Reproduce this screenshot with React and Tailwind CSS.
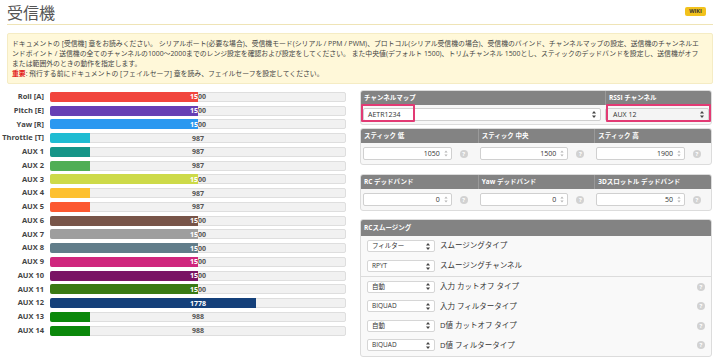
import React from "react";

const channels = [
  { label: "Roll [A]", value: 1500, color: "#f1453d" },
  { label: "Pitch [E]", value: 1500, color: "#673fb4" },
  { label: "Yaw [R]", value: 1500, color: "#2b98f0" },
  { label: "Throttle [T]", value: 987, color: "#1fbcd2", wide: true },
  { label: "AUX 1", value: 987, color: "#159588" },
  { label: "AUX 2", value: 987, color: "#50ae55" },
  { label: "AUX 3", value: 1500, color: "#cdda49" },
  { label: "AUX 4", value: 987, color: "#fdc02f" },
  { label: "AUX 5", value: 987, color: "#fc5830" },
  { label: "AUX 6", value: 1500, color: "#785549" },
  { label: "AUX 7", value: 1500, color: "#9e9e9e" },
  { label: "AUX 8", value: 1500, color: "#617d8a" },
  { label: "AUX 9", value: 1500, color: "#cf267d" },
  { label: "AUX 10", value: 1500, color: "#7a1464" },
  { label: "AUX 11", value: 1500, color: "#3a7a14" },
  { label: "AUX 12", value: 1778, color: "#14407a" },
  { label: "AUX 13", value: 988, color: "#0b880b" },
  { label: "AUX 14", value: 988, color: "#0b880b" },
];

function Bar({ label, value, color, wide }) {
  const pct = Math.max(0, Math.min(1, (value - 800) / 1400)) * 100;
  return (
    <div className="flex items-center h-[13.75px]">
      <div
        className={
          "w-[44px] shrink-0 text-right text-[7.5px] font-bold text-[#444] whitespace-nowrap leading-none " +
          (wide ? "mr-[-3px]" : "")
        }
      >
        {label}
      </div>
      <div
        className={
          "relative shrink-0 w-[296px] h-[10px] bg-[#f1f1f1] border border-[#dedede] rounded-[2px] " +
          (wide ? "ml-[9px]" : "ml-[6px]")
        }
      >
        <div className="absolute inset-0 flex items-center justify-center text-[7px] font-bold text-[#555] leading-none">
          {value}
        </div>
        <div
          className="absolute left-[-1px] top-[-1px] bottom-[-1px] overflow-hidden rounded-l-[2px]"
          style={{ width: `calc(${pct}% + 1px)`, background: color }}
        >
          <div className="w-[296px] h-full flex items-center justify-center text-[7px] font-bold text-white leading-none">
            {value}
          </div>
        </div>
      </div>
    </div>
  );
}

function SelectArrows() {
  return (
    <svg width="4" height="7" viewBox="0 0 4 7" className="shrink-0">
      <path d="M2 0 L4 2.6 L0 2.6 Z" fill="#444" />
      <path d="M2 7 L4 4.4 L0 4.4 Z" fill="#444" />
    </svg>
  );
}

function SpinArrows() {
  return (
    <svg width="4" height="7" viewBox="0 0 4 7" className="shrink-0">
      <path d="M2 0.5 L3.6 2.6 L0.4 2.6 Z" fill="#b5b5b5" />
      <path d="M2 6.5 L3.6 4.4 L0.4 4.4 Z" fill="#b5b5b5" />
    </svg>
  );
}

function Help() {
  return (
    <div className="w-[8px] h-[8px] rounded-full bg-[#d2d2d2] flex items-center justify-center text-white text-[6px] font-bold leading-none shrink-0">
      ?
    </div>
  );
}

function NumField({ value }) {
  return (
    <div className="flex items-center px-[2px] h-[21px]">
      <div className="flex-1 h-[13px] bg-white border border-[#d0d0d0] rounded-[2px] flex items-center justify-end pr-[3px] gap-[4px]">
        <span className="text-[7px] text-[#333] leading-none">{value}</span>
        <SpinArrows />
      </div>
      <div className="w-[24px] flex justify-center">
        <Help />
      </div>
    </div>
  );
}

function TriplePanel({ headers, values }) {
  return (
    <div className="rounded-[3px] border border-[#dcdcdc] bg-[#f7f7f7] overflow-hidden">
      <div className="grid grid-cols-3 bg-[#838383] h-[14px]">
        {headers.map((h, i) => (
          <div
            key={h}
            className={
              "flex items-center px-[3px] text-white font-bold text-[6.5px] whitespace-nowrap " +
              (i > 0 ? "border-l border-[#9a9a9a]" : "")
            }
          >
            {h}
          </div>
        ))}
      </div>
      <div className="grid grid-cols-3">
        {values.map((v, i) => (
          <NumField key={i} value={v} />
        ))}
      </div>
    </div>
  );
}

function SmoothRow({ sel, label, help, tall }) {
  return (
    <div className={"flex items-center pl-[6px] pr-[6px] " + (tall ? "h-[20px]" : "h-[19.5px]")}>
      <div className="w-[68px] h-[12px] bg-white border border-[#d6d6d6] rounded-[2px] flex items-center justify-between px-[4px]">
        <span className="text-[6.5px] text-[#333] leading-none">{sel}</span>
        <SelectArrows />
      </div>
      <span className="ml-[5px] text-[7.5px] text-[#333] leading-none">{label}</span>
      <div className="flex-1" />
      {help && <Help />}
    </div>
  );
}

export default function App() {
  return (
    <div className="w-[720px] h-[361px] overflow-hidden bg-white text-[#333] font-['Open_Sans','Noto_Sans_CJK_JP',sans-serif]">
      <div className="px-[7px]">
        <div className="flex items-center justify-between h-[25px] border-b border-[#efe4b6]">
          <h1 className="text-[16px] text-[#555] leading-none mt-[1px] font-normal">受信機</h1>
          <span className="bg-[#f2c21c] text-[5.5px] font-bold text-[#333] w-[21px] h-[9px] flex items-center justify-center rounded-[2px] mr-[7px] mb-[1px]">
            WIKI
          </span>
        </div>

        <div className="mt-[8px] h-[51px] bg-[#fff8d9] border border-[#f5ecc4] rounded-[2px] pl-[4px] pt-[5px] text-[6.85px] leading-[10px] text-[#444] whitespace-nowrap overflow-hidden">
          <div>
            ドキュメントの [受信機] 章をお読みください。 シリアルポート(必要な場合)、受信機モード(シリアル / PPM / PWM)、プロトコル(シリアル受信機の場合)、受信機のバインド、チャンネルマップの設定、送信機のチャンネルエ
          </div>
          <div>
            ンドポイント / 送信機の全てのチャンネルの1000～2000までのレンジ設定を確認および設定をしてください。 また中央値(デフォルト 1500)、トリムチャンネル 1500とし、スティックのデッドバンドを設定し、送信機がオフ
          </div>
          <div>または範囲外のときの動作を指定します。</div>
          <div>
            <span className="text-[#e2231a] font-bold">重要</span>: 飛行する前にドキュメントの [フェイルセーフ] 章を読み、フェイルセーフを設定してください。
          </div>
        </div>

        <div className="flex mt-[6px]">
          <div className="w-[346px] shrink-0 ml-[-7px] flex flex-col">
            {channels.map((c) => (
              <Bar key={c.label} {...c} />
            ))}
          </div>

          <div className="ml-[14px] w-[352px] shrink-0 flex flex-col">
            <div className="relative rounded-[3px] border border-[#dcdcdc] bg-[#f7f7f7]">
              <div className="flex bg-[#838383] h-[14px] rounded-t-[2px]">
                <div className="flex-1 flex items-center px-[3px] text-white font-bold text-[6.5px]">チャンネルマップ</div>
                <div className="w-[106px] flex items-center px-[3px] border-l border-[#9a9a9a] text-white font-bold text-[6.5px]">
                  RSSI チャンネル
                </div>
              </div>
              <div className="flex items-center h-[19px] px-[2px]">
                <div className="flex-1 h-[13px] bg-white border border-[#d0d0d0] rounded-[2px] flex items-center justify-between pl-[4px] pr-[4px]">
                  <span className="text-[7px] leading-none">AETR1234</span>
                  <SelectArrows />
                </div>
                <div className="w-[104px] ml-[4px] h-[13px] bg-[#f4f4f4] border border-[#d0d0d0] rounded-[2px] flex items-center justify-between pl-[7px] pr-[4px]">
                  <span className="text-[7px] leading-none">AUX 12</span>
                  <SelectArrows />
                </div>
              </div>
              <div className="absolute left-[0px] top-[13px] w-[54px] h-[18px] border-2 border-[#e23a74] rounded-[1px]" />
              <div className="absolute right-[0px] top-[13px] w-[105px] h-[18px] border-2 border-[#e23a74] rounded-[1px]" />
            </div>

            <div className="mt-[3px]">
              <TriplePanel headers={["スティック 低", "スティック 中央", "スティック 高"]} values={["1050", "1500", "1900"]} />
            </div>
            <div className="mt-[9px]">
              <TriplePanel headers={["RC デッドバンド", "Yaw デッドバンド", "3Dスロットル デッドバンド"]} values={["0", "0", "50"]} />
            </div>

            <div className="mt-[8px] rounded-[3px] border border-[#dcdcdc] bg-[#f9f9f9] overflow-hidden">
              <div className="bg-[#838383] h-[16px] flex items-center px-[3px] text-white font-bold text-[6.5px]">RCスムージング</div>
              <div>
                <SmoothRow sel="フィルター" label="スムージングタイプ" tall />
                <SmoothRow sel="RPYT" label="スムージングチャンネル" tall />
              </div>
              <div className="border-t border-[#dcdcdc] pb-[1px]">
                <SmoothRow sel="自動" label="入力 カットオフ タイプ" help />
                <SmoothRow sel="BIQUAD" label="入力 フィルタータイプ" help />
                <SmoothRow sel="自動" label="D値 カットオフ タイプ" help />
                <SmoothRow sel="BIQUAD" label="D値 フィルタータイプ" help />
              </div>
            </div>
          </div>
        </div>
      </div>
    </div>
  );
}
